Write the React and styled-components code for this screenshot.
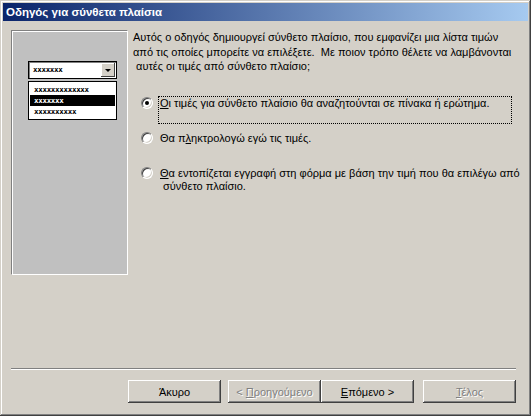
import React from 'react'
import styled, { createGlobalStyle } from 'styled-components'

const Global = createGlobalStyle`
  html, body { margin: 0; padding: 0; background: #d4d0c8; }
  body { font-family: "Liberation Sans", Arial, sans-serif; font-size: 11px; color: #000; }
  * { box-sizing: border-box; }
`

const Window = styled.div`
  width: 531px;
  height: 416px;
  background: #d4d0c8;
  padding: 3px;
  display: flex;
  flex-direction: column;
  box-shadow: inset -1px -1px #404040, inset 1px 1px #d4d0c8,
    inset -2px -2px #808080, inset 2px 2px #ffffff;
`

const TitleBar = styled.div`
  height: 18px;
  background: linear-gradient(to right, #0a246a, #a6caf0);
  color: #fff;
  font-family: "Liberation Sans", Arial, sans-serif;
  font-weight: bold;
  font-size: 11.5px;
  display: flex;
  align-items: center;
  padding-left: 3px;
`

const Body = styled.div`
  flex: 1;
  display: flex;
  padding: 9px 0 0 8px;
`

const Picture = styled.div`
  flex: none;
  width: 117px;
  height: 245px;
  background: #c0c0c0;
  border: 1px solid #ffffff;
  border-top-color: #808080;
  border-left-color: #808080;
  box-shadow: inset 1px 1px #ffffff;
  padding: 30px 0 0 16px;
`

const Combo = styled.div`
  width: 89px;
  height: 18px;
  background: #fff;
  border: 1px solid #000;
  box-shadow: inset 1px 1px #808080;
  display: flex;
  align-items: center;
  justify-content: space-between;
  padding-left: 4px;
`

const Fake = styled.span`
  font-family: "DejaVu Sans Mono", monospace;
  font-size: 7.5px;
  font-weight: bold;
  letter-spacing: -0.3px;
  line-height: 1;
  color: ${p => (p.$light ? '#fff' : '#000')};
`

const DropBtn = styled.div`
  width: 14px;
  height: 14px;
  margin-right: 1px;
  background: #d4d0c8;
  box-shadow: inset -1px -1px #404040, inset 1px 1px #ffffff;
  display: flex;
  align-items: center;
  justify-content: center;
  &::after {
    content: '';
    border-left: 3px solid transparent;
    border-right: 3px solid transparent;
    border-top: 3px solid #000;
  }
`

const List = styled.div`
  width: 89px;
  margin-top: 2px;
  background: #fff;
  border: 1px solid #000;
  padding: 2px 1px;
`

const ListItem = styled.div`
  height: 11px;
  display: flex;
  align-items: center;
  padding-left: 4px;
  background: ${p => (p.$selected ? '#000' : '#fff')};
`

const Right = styled.div`
  flex: 1;
  min-width: 0;
  padding: 0 0 0 5px;
  display: flex;
  flex-direction: column;
`

const Intro = styled.p`
  margin: 0;
  line-height: 14.5px;
  white-space: pre-wrap;
`

const Options = styled.div`
  display: flex;
  flex-direction: column;
  margin: 22px 0 0 8px;
`

const Option = styled.label`
  display: flex;
  align-items: flex-start;
  gap: 5px;
  min-height: 35px;
`

const Radio = styled.span`
  flex: none;
  width: 12px;
  height: 12px;
  margin-top: 1px;
  border-radius: 50%;
  background: #fff;
  border: 1px solid;
  border-color: #808080 #ffffff #ffffff #808080;
  box-shadow: inset 1px 1px #404040, inset -1px -1px #d4d0c8;
  display: flex;
  align-items: center;
  justify-content: center;
  &::after {
    content: '';
    width: 4px;
    height: 4px;
    border-radius: 50%;
    background: ${p => (p.$checked ? '#000' : 'transparent')};
  }
`

const OptionText = styled.span`
  flex: ${p => (p.$focus ? 1 : 'none')};
  height: ${p => (p.$focus ? '28px' : 'auto')};
  margin-right: ${p => (p.$focus ? '16px' : '0')};
  padding: 0 1px;
  line-height: 13px;
  white-space: nowrap;
  border: 1px dotted ${p => (p.$focus ? '#000' : 'transparent')};
`

const Footer = styled.div`
  padding: 0 12px 10px 8px;
`

const Separator = styled.div`
  height: 2px;
  border-top: 1px solid #808080;
  border-bottom: 1px solid #ffffff;
  margin-bottom: 10px;
`

const Buttons = styled.div`
  display: flex;
  padding-left: 117px;
`

const Button = styled.button`
  width: 93px;
  height: 23px;
  margin-left: ${p => p.$gap || 0}px;
  padding: 0;
  font-family: "Liberation Sans", Arial, sans-serif;
  font-size: 11px;
  background: #d4d0c8;
  border: none;
  box-shadow: inset -1px -1px #404040, inset 1px 1px #ffffff,
    inset -2px -2px #808080;
  color: ${p => (p.disabled ? '#808080' : '#000')};
  text-shadow: ${p => (p.disabled ? '1px 1px #ffffff' : 'none')};
`

export default function App () {
  return <>
    <Global />
    <Window>
      <TitleBar>Οδηγός για σύνθετα πλαίσια</TitleBar>
      <Body>
        <Picture>
          <Combo>
            <Fake>xxxxxxx</Fake>
            <DropBtn />
          </Combo>
          <List>
            <ListItem><Fake>xxxxxxxxxxxxx</Fake></ListItem>
            <ListItem $selected><Fake $light>xxxxxxx</Fake></ListItem>
            <ListItem><Fake>xxxxxxxxxx</Fake></ListItem>
          </List>
        </Picture>
        <Right>
          <Intro>
            {'Αυτός ο οδηγός δημιουργεί σύνθετο πλαίσιο, που εμφανίζει μια λίστα τιμών\nαπό τις οποίες μπορείτε να επιλέξετε.  Με ποιον τρόπο θέλετε να λαμβάνονται\n αυτές οι τιμές από σύνθετο πλαίσιο;'}
          </Intro>
          <Options>
            <Option>
              <Radio $checked />
              <OptionText $focus><u>Ο</u>ι τιμές για σύνθετο πλαίσιο θα αναζητούνται σε πίνακα ή ερώτημα.</OptionText>
            </Option>
            <Option>
              <Radio />
              <OptionText>Θα π<u>λ</u>ηκτρολογώ εγώ τις τιμές.</OptionText>
            </Option>
            <Option>
              <Radio />
              <OptionText><u>Θ</u>α εντοπίζεται εγγραφή στη φόρμα με βάση την τιμή που θα επιλέγω από<br />&nbsp;σύνθετο πλαίσιο.</OptionText>
            </Option>
          </Options>
        </Right>
      </Body>
      <Footer>
        <Separator />
        <Buttons>
          <Button>Άκυρο</Button>
          <Button $gap={7} disabled>&lt; <u>Π</u>ροηγούμενο</Button>
          <Button><u>Ε</u>πόμενο &gt;</Button>
          <Button $gap={9} disabled><u>Τ</u>έλος</Button>
        </Buttons>
      </Footer>
    </Window>
  </>
}
